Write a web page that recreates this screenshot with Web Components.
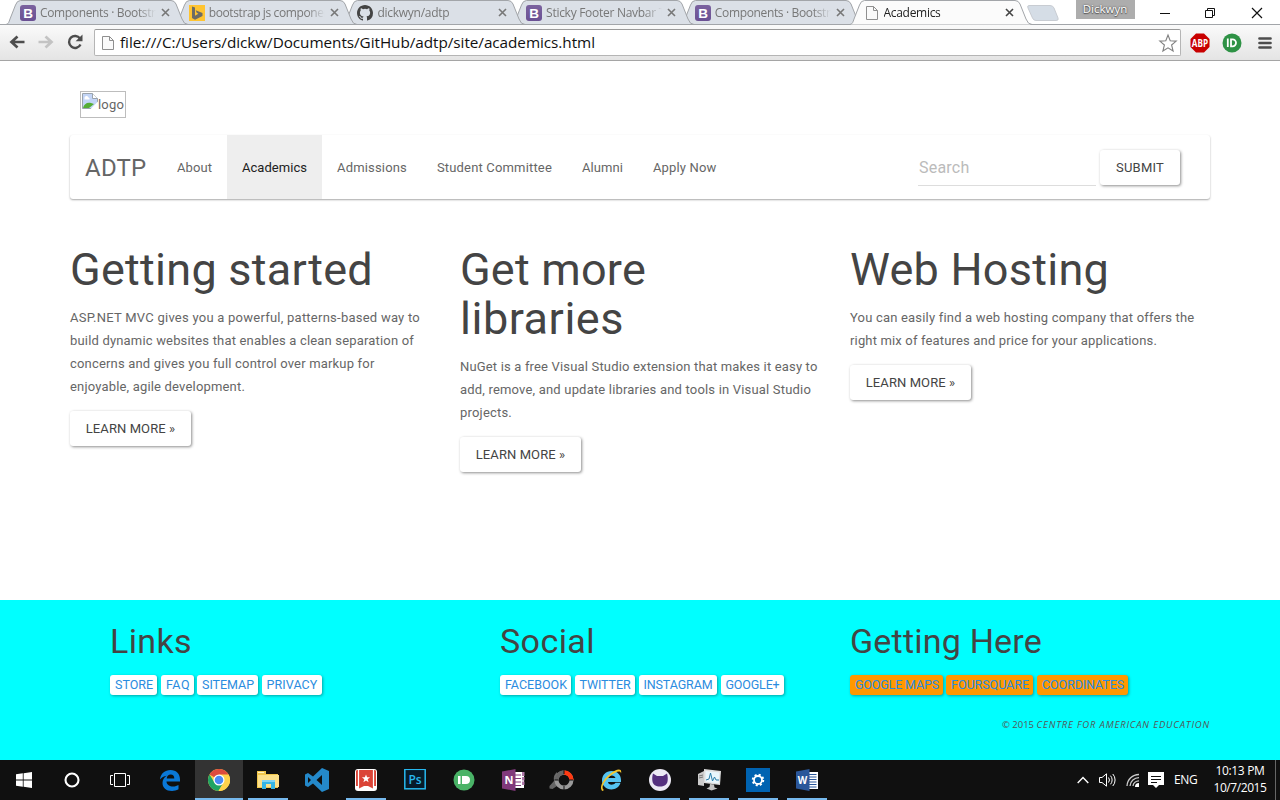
<!DOCTYPE html>
<html lang="en">
<head>
<meta charset="utf-8">
<title>Academics</title>
<style>
html,body{margin:0;padding:0;width:1280px;height:800px;overflow:hidden;background:#fff}
</style>
</head>
<body>
<desktop-screen></desktop-screen>
<script>
const make = (name, html, init) => customElements.define(name, class extends HTMLElement {
  constructor() {
    super();
    this.attachShadow({mode: 'open'}).innerHTML = typeof html === 'function' ? html(this) : html;
    if (init) init(this);
  }
});

const B = '<defs><linearGradient id="g" x2="0" y2="1"><stop stop-color="#7b629f"/><stop offset="1" stop-color="#6a5093"/></linearGradient></defs><rect width="16" height="16" rx="3" fill="url(#g)"/><text x="3.2" y="13" font-family="Liberation Sans" font-weight="bold" font-size="13.5" fill="#fff">B</text>';
const OCTO = 'M8 0C3.58 0 0 3.58 0 8c0 3.54 2.29 6.53 5.47 7.59.4.07.55-.17.55-.38 0-.19-.01-.82-.01-1.49-2.01.37-2.53-.49-2.69-.94-.09-.23-.48-.94-.82-1.13-.28-.15-.68-.52-.01-.53.63-.01 1.08.58 1.23.82.72 1.21 1.87.87 2.33.66.07-.52.28-.87.51-1.07-1.78-.2-3.64-.89-3.64-3.95 0-.87.31-1.59.82-2.15-.08-.2-.36-1.02.08-2.12 0 0 .67-.21 2.2.82a7.6 7.6 0 0 1 4 0c1.53-1.04 2.2-.82 2.2-.82.44 1.1.16 1.92.08 2.12.51.56.82 1.27.82 2.15 0 3.07-1.87 3.75-3.65 3.95.29.25.54.73.54 1.48 0 1.07-.01 1.93-.01 2.2 0 .21.15.46.55.38A8 8 0 0 0 16 8c0-4.42-3.58-8-8-8z';
/* name: [width, height, svg body] */
const ICONS = {
  bootstrap: [16,16,B],
  bing: [16,16,'<rect width="16" height="16" fill="#ffc431"/><path d="M3 1.500l3 1v8.200l3.400-2-1.700-.9-1-2.600L13.500 8v3L6 14.800 3 13z" fill="#6c6c66"/>'],
  github: [16,16,`<path d="${OCTO}" fill="#444"/>`],
  page: [12,16,'<path d="M.5 1.500h7l4 4v9h-11z" fill="#fafafa" stroke="#8f8f8f"/><path d="M7.500 1.500v4h4" fill="none" stroke="#8f8f8f"/>'],
  back: [16,16,'<path d="M8.500 2.500L2.500 8l6 5.500M3 8h12.500" fill="none" stroke="#4d4d4d" stroke-width="2.700"/>'],
  forward: [16,16,'<path d="M7.500 2.500l6 5.500-6 5.500M13 8H.5" fill="none" stroke="#c3c3c3" stroke-width="2.700"/>'],
  reload: [16,16,'<path d="M13 4.500A6 6 0 1 0 13.500 10.500" fill="none" stroke="#4d4d4d" stroke-width="2.400"/><path d="M15.500.5v6.800H8.600z" fill="#4d4d4d"/>'],
  star: [20,20,'<path d="M10 2l2.200 5.800 6 .3-4.600 3.900 1.500 6L10 14.800 4.900 18l1.500-6-4.600-3.900 6-.3z" fill="#fff" stroke="#808080" stroke-width="1.100"/>'],
  abp: [20,20,'<path d="M6 .5h8L19.500 6v8L14 19.500H6L.5 14V6z" fill="#c80000"/><text x="1.800" y="13.600" textLength="16.200" lengthAdjust="spacingAndGlyphs" font-family="Open Sans" font-weight="bold" font-size="10" fill="#fff">ABP</text>'],
  bullet: [20,20,'<circle cx="10" cy="10" r="9.500" fill="#2e9245"/><path d="M5.800 5.500v8.500" stroke="#fff" stroke-width="1.800"/><path d="M9 6.300h1.500a3.500 3.500 0 0 1 0 7H9z" fill="none" stroke="#fff" stroke-width="1.800"/>'],
  menu: [14,14,'<path d="M1.500 2.500h11M1.500 7h11M1.500 11.500h11" stroke="#4d4d4d" stroke-width="2.700" stroke-linecap="round"/>'],
  min: [10,12,'<path d="M0 6.500h10" stroke="#111"/>'],
  restore: [11,11,'<path d="M.5 2.500h7v7h-7zM2.500 2.500v-2h7v7h-2" fill="none" stroke="#111"/>'],
  close: [12,12,'<path d="M1 1l10 10M11 1L1 11" stroke="#111" stroke-width="1.200"/>'],
  broken: [16,16,'<path d="M.5.5h10l5 5v10H.5z" fill="#c3d5f7" stroke="#9aa3ad"/><path d="M2.500 5.500a2 2 0 0 1 4-1 1.500 1.500 0 0 1 1 2h-5z" fill="#fff"/><path d="M1 15c1-4 4-6 8-5l3 1-5 4z" fill="#55ad35"/><path d="M10.500.5v5h5" fill="#fff" stroke="#9aa3ad"/><path d="M16 8.500L8.500 16H16z" fill="#fff"/>'],
  windows: [16,16,'<path d="M0 2.300l6.800-1v6.300H0zM7.600 1.200L16 0v7.600H7.600zM0 8.400h6.800v6.300l-6.800-1zM7.600 8.400H16V16l-8.400-1.200z" fill="#fff"/>'],
  cortana: [16,16,'<circle cx="8" cy="8" r="6.500" fill="none" stroke="#fff" stroke-width="2.100"/>'],
  taskview: [20,14,'<path d="M4.500.5h11v13h-11zM3 2.500H.5v9H3M17 2.500h2.500v9H17" fill="none" stroke="#fff"/>'],
  edge: [22,22,'<path d="M1 10.500C1.700 4.500 6 1 11.500 1 17.500 1 21 5 21 10.500v2H7.500c.2 3.500 3.200 5 6.500 5 2.200 0 4-.6 5.500-1.500v4.300C17.500 21.500 15.300 22 13 22 7 22 3.500 18.700 3.500 14c0-3.200 1.700-5.800 4.300-7.300C4.900 7.200 2.500 8.500 1 10.500zM7.700 9.500h7.600c0-2.400-1.300-3.900-3.600-3.900-2.200 0-3.700 1.600-4 3.900z" fill="#0a78d8"/>'],
  chrome: [22,22,'<circle cx="11" cy="11" r="11" fill="#ffd24b"/><path d="M11 11L1.470 5.500A11 11 0 0 1 20.530 5.500z" fill="#dd4b3e"/><path d="M1.470 5.500A11 11 0 0 0 10.500 22L15.500 13.500 11 11 6.500 13.500z" fill="#1fa463"/><path d="M11 5.500h9.530A11 11 0 0 1 10.500 22L16 13z" fill="#ffd24b"/><circle cx="11" cy="11" r="5.500" fill="#fff"/><circle cx="11" cy="11" r="4.300" fill="#4a8af4"/>'],
  folder: [22,20,'<path d="M0 1h9v3h12v14H0z" fill="#f0c64c"/><path d="M1 2h6v1H1z" fill="#fff4c0"/><path d="M1 5h21v12H1z" fill="#fce08a"/><path d="M5 10h13v9h-4v-5H9v5H5z" fill="#35b6e6"/><path d="M5 10h13v2H5z" fill="#7fd4f5"/>'],
  vscode: [24,24,'<path fill-rule="evenodd" d="M17 0l7 3v18l-7 3-9-8.500L3 19l-3-1.500v-11L3 5l5 3.500zM17 7l-5.500 5 5.500 5zM3 9v6l3-3z" fill="#2489ca"/>'],
  wunder: [22,22,'<rect width="22" height="22" rx="3" fill="#fff"/><path d="M1 2a2 2 0 0 1 1-1h18a2 2 0 0 1 1 1v15H1z" fill="#db4437"/><path d="M4 1h14v18.500L11 16l-7 3.500z" fill="#db4437"/><path d="M3.500 1v18.500M18.500 1v18.500" stroke="#fff" stroke-width="1.200"/><path d="M11 5.500l1.100 2.800h3l-2.400 1.900.9 3L11 11.500l-2.600 1.700.9-3-2.400-1.900h3z" fill="#fff"/>'],
  ps: [22,22,'<rect x=".8" y=".3" width="20.400" height="19.500" fill="#071b29" stroke="#27b8ee" stroke-width="1.500"/><text x="4.500" y="14.500" textLength="13" font-family="Open Sans" font-weight="600" font-size="12" fill="#27b8ee">Ps</text>'],
  bulletgreen: [22,22,'<circle cx="11" cy="11" r="10.500" fill="#4ab367"/><path d="M5 7h2.500v8H5zM9 7h4a4 4 0 0 1 0 8H9z" fill="#fff"/>'],
  onenote: [23,22,'<path d="M12 3h10v16H12z" fill="#fff"/><path d="M13 6h6M13 9.500h6M13 13h6M13 16.500h6" stroke="#80397b"/><path d="M20 3h2.500v4H20zM20 8h2.500v3.500H20zM20 12.500h2.500V16H20z" fill="#b07aaa"/><path d="M0 2.500L13.500 0v22L0 19.500z" fill="#80397b"/><text x="2.500" y="15" font-family="Open Sans" font-weight="bold" font-size="11" fill="#fff">N</text>'],
  ring: [26,22,'<path d="M8 3a9 9 0 0 0-3 9L.5 17v2.500l3 .5 6-4" fill="#666"/><circle cx="15" cy="11" r="7.500" fill="#101010" stroke="#9a9a9a" stroke-width="4"/><path d="M15 3.500a7.500 7.500 0 0 1 7.500 7.500" fill="none" stroke="#ff3a12" stroke-width="4.400"/><path d="M15 3.500A7.500 7.500 0 0 0 7.500 11" fill="none" stroke="#666" stroke-width="4.400"/><path d="M15 1v4M15 17v4M5.500 11h4M20 11h4" stroke="#101010"/>'],
  ie: [24,24,'<path d="M12.500 3C18.500 3 22 7 22 12v2H9c.3 3 5 4 7.500.8H21.500C20 19.500 16.500 21.500 12.500 21.500 7 21.500 3 17.500 3 12.300S7 3 12.500 3zM9 10h7.500C15.800 6.500 9.800 6.500 9 10z" fill="#55c4f2"/><path d="M3.500 23C-.5 20 4 11.500 11 6 17 1 23.500-.5 22 5.500 21.500 1.500 16 4 10.500 8.500 5 13.500 1.500 20 5 22z" fill="#f7c52b"/>'],
  ghdesk: [22,22,'<circle cx="11" cy="11" r="11" fill="#ece9f5"/><path d="M4 4.500L8 7h6l4-2.500c.8 2.500.9 5 .6 7.500-.6 4-3.600 5.500-7.600 5.500S4 16 3.400 12C3.100 9.500 3.200 7 4 4.500z" fill="#55307f"/>'],
  monitor: [23,22,'<path d="M0 5l6-3v15l-6-1z" fill="#ccc"/><path d="M1 7l4-1M1 9l4-1" stroke="#777"/><path d="M6 0l17 2-1 14-16-2z" fill="#dedede"/><path d="M7.500 2l14 1.500-.8 11-13.200-1.700z" fill="#e8f6fc"/><path d="M8 11l3-1 1.500-6 2 8 2-4 1.500 3h3" fill="none" stroke="#287ca8"/><path d="M12 15l4 .5.500 3 3 1-6 2-5-2 3-1.500z" fill="#c4c4c4"/>'],
  gear: [24,24,'<rect width="24" height="24" fill="#0063b1"/><circle cx="12" cy="12" r="4" fill="none" stroke="#fff" stroke-width="1.800"/><circle cx="12" cy="12" r="5.300" fill="none" stroke="#fff" stroke-width="1.900" stroke-dasharray="2.080 2.080"/>'],
  word: [23,22,'<path d="M12 3h10v17H12z" fill="#fff"/><path d="M13 5.500h7.500M13 8h7.500M13 10.500h7.500M13 13h7.500M13 15.500h7.500M13 18h7.500" stroke="#2b579a"/><path d="M0 2.500L13.500 0v22L0 19.500z" fill="#2b579a"/><text x="1.800" y="15" textLength="9.500" lengthAdjust="spacingAndGlyphs" font-family="Open Sans" font-weight="bold" font-size="11" fill="#fff">W</text>'],
  up: [12,8,'<path d="M.7 7L6 1.500 11.300 7" fill="none" stroke="#fff" stroke-width="1.400"/>'],
  volume: [18,14,'<path d="M.5 4.500h2.500L7.500.8v12.400L3 9.500H.5z" fill="none" stroke="#fff"/><path d="M9.500 4.500a4 4 0 0 1 0 5M11.500 2.700a6.500 6.500 0 0 1 0 8.600M13.800 1a9 9 0 0 1 0 12" fill="none" stroke="#fff"/>'],
  wifi: [14,14,'<path d="M1 13A12 12 0 0 1 13 1.500M4 13a9 9 0 0 1 9-8.300M7 13a6 6 0 0 1 6-5.200" fill="none" stroke="#ccc" stroke-width="1.300"/><path d="M9 14a4 4 0 0 1 4-4v4z" fill="#fff"/>'],
  note: [16,16,'<path d="M0 0h16v13h-5l-3 3-3-3H0z" fill="#fff"/><path d="M3 4.500h10M3 7.500h10M3 10.500h6" stroke="#101010"/>']
};
make('ui-icon', el => {
  const [w, h, body] = ICONS[el.getAttribute('name')];
  return `<style>:host{display:block;flex:none;width:${w}px;height:${h}px}svg{display:block}</style><svg width="${w}" height="${h}" viewBox="0 0 ${w} ${h}">${body}</svg>`;
});

/* ---------- browser window ---------- */
make('browser-tab', el => {
  const on = el.hasAttribute('active');
  return `<style>
  :host{display:grid;flex:none;width:182px;height:25px;margin-right:-13.300px}
  :host([active]){margin-right:0}
  svg.s{grid-area:1/1;display:block}
  .c{grid-area:1/1;display:flex;align-items:center;height:24px;padding:1px 0 0 14px;position:relative;font:12px/16px "Open Sans",sans-serif;color:#777;box-sizing:border-box}
  :host([active]) .c{color:#222}
  .i{width:16px;margin-right:4px;display:flex}
  .t{width:117px;margin-right:4px;overflow:hidden;white-space:nowrap;-webkit-mask:linear-gradient(90deg,#000 98px,transparent 116px)}
  .x{width:9px;height:9px}
  </style>
  <svg class="s" width="182" height="25"><path d="M0 24.500C2.500 24 3 22 4 19L9.500 5Q11 .5 14.500 .5H165Q168.500.5 170 4L176 19Q178 24.500 182 24.500" fill="${on ? '#fbfbfb' : '#dbe0e7'}" stroke="#a2a5a9"/>${on ? '' : '<path d="M0 24.500H182" stroke="#a2a5a9"/>'}</svg>
  <div class="c"><span class="i"><slot name="icon"></slot></span><span class="t"><slot></slot></span>
  <svg class="x" viewBox="0 0 9 9"><path d="M1 1l7 7M8 1L1 8" stroke="${on ? '#444' : '#777'}" stroke-width="1.600"/></svg></div>`;
});

make('tab-strip', `<style>
  :host{display:flex;height:25px;padding-left:6px;box-sizing:border-box;background:linear-gradient(#a2a5a9,#a2a5a9) 0 24px/100% 1px no-repeat #fff;align-items:flex-start}
  browser-tab{position:relative}
  .new{display:block;margin:4px 16px 0 -6px}
  .who{width:59px;height:19px;background:#adadad;color:#fff;font:11.500px/18px "Open Sans",sans-serif;text-align:center;text-shadow:0 0 2px #444,0 1px 1px #555}
  .win{display:flex;align-items:center;height:26px;padding-left:25px;gap:35px}
  </style>
  <browser-tab style="z-index:5"><ui-icon slot="icon" name="bootstrap"></ui-icon><fit-text w="129">Components · Bootstrap</fit-text></browser-tab>
  <browser-tab style="z-index:4"><ui-icon slot="icon" name="bing"></ui-icon><fit-text w="131">bootstrap js components</fit-text></browser-tab>
  <browser-tab style="z-index:3"><ui-icon slot="icon" name="github"></ui-icon><fit-text w="72">dickwyn/adtp</fit-text></browser-tab>
  <browser-tab style="z-index:2"><ui-icon slot="icon" name="bootstrap"></ui-icon><fit-text w="146">Sticky Footer Navbar Templ</fit-text></browser-tab>
  <browser-tab style="z-index:1"><ui-icon slot="icon" name="bootstrap"></ui-icon><fit-text w="129">Components · Bootstrap</fit-text></browser-tab>
  <browser-tab active style="z-index:6"><ui-icon slot="icon" name="page" style="margin-left:2px"></ui-icon><fit-text w="57">Academics</fit-text></browser-tab>
  <svg class="new" width="34" height="18"><path d="M3 1.500H24Q27 1.500 28 4L32 14Q33 16.500 30 16.500H10Q7.500 16.500 6.500 14L2 4Q1 1.500 3 1.500z" fill="#d5dde6" stroke="#c8ccd2"/></svg>
  <div class="who">Dickwyn</div>
  <div class="win"><ui-icon name="min"></ui-icon><ui-icon name="restore"></ui-icon><ui-icon name="close"></ui-icon></div>`);

make('address-bar', `<style>
  :host{display:flex;align-items:center;height:36px;box-sizing:border-box;padding:0 7px 0 9px;border-bottom:1px solid #a5a5a5;background:linear-gradient(#fafafa,#e4e4e4)}
  .nav{display:flex;gap:13px;width:85px;height:17px}
  .box{display:flex;align-items:center;box-sizing:border-box;width:1087px;height:27px;border:1px solid #b5b5b5;border-top-color:#999;border-radius:2px;background:#fff;padding:0 2px 0 7px;font:15.300px/24px "Open Sans",sans-serif;color:#111}
  .url{margin-left:6px;flex:1;position:relative;top:-.5px}
  .ext{display:flex;align-items:center;gap:12px;padding-left:9px}
  .ext ui-icon:last-child{margin-left:4px}
  </style>
  <div class="nav"><ui-icon name="back"></ui-icon><ui-icon name="forward"></ui-icon><ui-icon name="reload"></ui-icon></div>
  <div class="box"><ui-icon name="page"></ui-icon><span class="url"><fit-text w="475">file:///C:/Users/dickw/Documents/GitHub/adtp/site/academics.html</fit-text></span><ui-icon name="star"></ui-icon></div>
  <div class="ext"><ui-icon name="abp"></ui-icon><ui-icon name="bullet"></ui-icon><ui-icon name="menu"></ui-icon></div>`);

/* ---------- page ---------- */
make('paper-button', `<style>
  :host{display:inline-flex;align-items:center;justify-content:center;height:35px;border-radius:3px;background:#fff;color:#444;font:13px/23px Roboto,sans-serif;box-shadow:1px 1px 3px rgba(0,0,0,.45);box-sizing:border-box}
  </style><slot></slot>`);
make('nav-item', `<style>
  :host{display:flex;align-items:center;height:64px;padding:0 15px;color:#666;font:13px/23px Roboto,sans-serif}
  :host([active]){background:#eee;color:#212121}
  </style><slot></slot>`);
make('site-navbar', `<style>
  :host{display:flex;align-items:center;height:64px;border-radius:3px;background:#fff;box-shadow:0 1px 2px rgba(0,0,0,.35);font-family:Roboto,sans-serif}
  .brand{width:62px;padding:2px 15px 0;font-size:24px;line-height:32px;color:#666}
  .f{margin-left:auto;display:flex;align-items:center;padding:1px 30px 0 0;gap:4px}
  .s{width:178px;height:36px;line-height:35px;box-sizing:border-box;border-bottom:1px solid #ddd;font-size:16px;color:#bbb;padding-left:1px}
  </style>
  <div class="brand"><fit-text w="61.500">ADTP</fit-text></div>
  <nav-item><fit-text w="35">About</fit-text></nav-item>
  <nav-item active><fit-text w="65">Academics</fit-text></nav-item>
  <nav-item><fit-text w="70">Admissions</fit-text></nav-item>
  <nav-item><fit-text w="115">Student Committee</fit-text></nav-item>
  <nav-item><fit-text w="41">Alumni</fit-text></nav-item>
  <nav-item><fit-text w="63.500">Apply Now</fit-text></nav-item>
  <div class="f"><div class="s"><fit-text w="50.500">Search</fit-text></div><paper-button style="width:80px"><fit-text w="48">SUBMIT</fit-text></paper-button></div>`);
make('promo-column', `<style>
  :host{display:block;font:13px/23px Roboto,sans-serif;color:#666}
  .h{font-size:45px;line-height:49px;color:#444;margin-bottom:12px}
  .p{margin-bottom:13px}
  ::slotted(fit-text){display:block}
  paper-button{width:121px}
  </style><div class="h"><slot name="title"></slot></div><div class="p"><slot></slot></div>
  <paper-button><fit-text w="89.500">LEARN MORE »</fit-text></paper-button>`);
make('link-tag', el => `<style>
  :host{display:flex;align-items:center;justify-content:center;box-sizing:border-box;height:20px;border-radius:3px;background:#fff;color:#2a8ce0;font:12.500px/20px Roboto,sans-serif;box-shadow:1px 1px 3px rgba(0,0,0,.35);width:${el.getAttribute('w')}px;padding-left:1px}
  :host([orange]){background:#ff9800}
  </style><fit-text w="${el.getAttribute('w') - 9}"><slot></slot></fit-text>`);
make('link-group', `<style>
  :host{display:block;font-family:Roboto,sans-serif}
  .h{font-size:34px;line-height:38px;color:#444;margin-bottom:15px}
  .r{display:flex;gap:4px}
  </style><div class="h"><slot name="title"></slot></div><div class="r"><slot></slot></div>`);
make('site-page', `<style>
  :host{display:flex;flex-direction:column;height:699px;background:#fff}
  .main{height:539px;padding:30px 70px 0;box-sizing:border-box}
  .logo{display:flex;box-sizing:border-box;width:46px;height:27px;margin:0 0 17px 10px;border:1px solid #bdbdbd;padding:1px;font:13px/23px Roboto,sans-serif;color:#666}
  .logo .a{width:26px;white-space:nowrap}
  .cols{display:grid;grid-template-columns:390px 390px 360px;padding-top:46px}
  footer{background:#0ff;height:160px;box-sizing:border-box;padding:22px 70px 0}
  .links{display:grid;grid-template-columns:390px 350px 360px;padding-left:40px}
  .copy{text-align:right;font:italic 9.500px/14px "Open Sans",sans-serif;color:#555;margin-top:23px}
  .copy span{font-style:normal}
  </style>
  <div class="main">
    <div class="logo"><ui-icon name="broken"></ui-icon><span class="a"><fit-text w="26">logo</fit-text></span></div>
    <site-navbar></site-navbar>
    <div class="cols">
      <promo-column><fit-text slot="title" w="303">Getting started</fit-text>
        <fit-text w="350">ASP.NET MVC gives you a powerful, patterns-based way to</fit-text>
        <fit-text w="344">build dynamic websites that enables a clean separation of</fit-text>
        <fit-text w="304.500">concerns and gives you full control over markup for</fit-text>
        <fit-text w="175">enjoyable, agile development.</fit-text></promo-column>
      <promo-column><fit-text slot="title" w="186">Get more</fit-text><fit-text slot="title" w="164">libraries</fit-text>
        <fit-text w="357.500">NuGet is a free Visual Studio extension that makes it easy to</fit-text>
        <fit-text w="351">add, remove, and update libraries and tools in Visual Studio</fit-text>
        <fit-text w="52">projects.</fit-text></promo-column>
      <promo-column><fit-text slot="title" w="259">Web Hosting</fit-text>
        <fit-text w="344">You can easily find a web hosting company that offers the</fit-text>
        <fit-text w="307">right mix of features and price for your applications.</fit-text></promo-column>
    </div>
  </div>
  <footer>
    <div class="links">
      <link-group><fit-text slot="title" w="82">Links</fit-text><link-tag w="47">STORE</link-tag><link-tag w="33" style="margin-right:-1px">FAQ</link-tag><link-tag w="61" style="margin-right:-.5px">SITEMAP</link-tag><link-tag w="60">PRIVACY</link-tag></link-group>
      <link-group><fit-text slot="title" w="95">Social</fit-text><link-tag w="71" style="margin-right:-.5px">FACEBOOK</link-tag><link-tag w="60">TWITTER</link-tag><link-tag w="78">INSTAGRAM</link-tag><link-tag w="63">GOOGLE+</link-tag></link-group>
      <link-group><fit-text slot="title" w="192">Getting Here</fit-text><link-tag orange w="93" style="margin-right:-1px">GOOGLE MAPS</link-tag><link-tag orange w="87">FOURSQUARE</link-tag><link-tag orange w="91">COORDINATES</link-tag></link-group>
    </div>
    <div class="copy"><span><fit-text w="34.500">© 2015 </fit-text></span><fit-text w="173.500">CENTRE FOR AMERICAN EDUCATION</fit-text></div>
  </footer>`);

/* ---------- taskbar ---------- */
make('task-item', `<style>
  :host{display:flex;align-items:center;justify-content:center;flex:none;width:48px;height:40px;box-sizing:border-box}
  :host([open]){background:linear-gradient(#76b9ed,#76b9ed) 4px 38px/40px 2px no-repeat}
  :host([active]){background:linear-gradient(#76b9ed,#76b9ed) 0 38px/48px 2px no-repeat #333}
  </style><slot></slot>`);
make('task-bar', () => {
  const apps = [['edge'],['chrome','active'],['folder','open'],['vscode'],['wunder','open'],['ps'],['bulletgreen'],['onenote'],['ring'],['ie'],['ghdesk','open'],['monitor','open'],['gear','open'],['word','open']];
  const item = ([n, a = '']) => `<task-item ${a}><ui-icon name="${n}"></ui-icon></task-item>`;
  return `<style>
  :host{display:flex;height:40px;background:#101010;color:#fff;font:12px/16px "Open Sans",sans-serif}
  .apps{display:flex;gap:1px;margin-left:2px}
  .tray{margin-left:auto;display:flex;align-items:center}
  .clock{width:56px;text-align:center;margin-left:14px;line-height:17px;padding-bottom:2px}
  .clock div{display:flex;justify-content:center}
  .edge{width:1px;height:40px;background:#666;margin:0 4px 0 7px}
  </style>
  ${['windows','cortana','taskview'].map(n => item([n])).join('')}
  <div class="apps">${apps.map(item).join('')}</div>
  <div class="tray"><ui-icon name="up"></ui-icon><ui-icon name="volume" style="margin-left:10px"></ui-icon><ui-icon name="wifi" style="margin-left:9px"></ui-icon><ui-icon name="note" style="margin-left:8px"></ui-icon>
  <span style="margin-left:10px;width:24px"><fit-text w="23.500">ENG</fit-text></span>
  <div class="clock"><div><fit-text w="49">10:13 PM</fit-text></div><div><fit-text w="53">10/7/2015</fit-text></div></div><span class="edge"></span></div>`;
});

make('desktop-screen', `<style>:host{display:flex;flex-direction:column;width:1280px;height:800px;overflow:hidden}</style>
  <tab-strip></tab-strip><address-bar></address-bar><site-page></site-page><task-bar></task-bar>`);

/* One line of text, tracked so that it fills w pixels. */
make('fit-text', '<style>:host{display:inline-block;white-space:pre}</style><span><slot></slot></span>', el => {
  const span = el.shadowRoot.querySelector('span');
  const n = el.shadowRoot.querySelector('slot').assignedNodes({flatten: true}).map(x => x.textContent).join('').length;
  if (n) span.style.letterSpacing = ((+el.getAttribute('w') - span.getBoundingClientRect().width) / n).toFixed(3) + 'px';
});
</script>
</body>
</html>
